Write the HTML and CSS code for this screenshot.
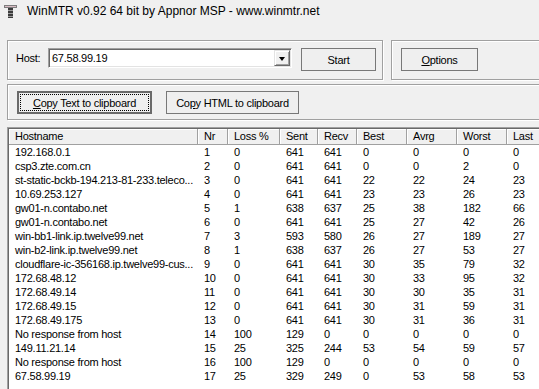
FILE: index.html
```html
<!DOCTYPE html>
<html>
<head>
<meta charset="utf-8">
<link rel="stylesheet" href="styles.css">
</head>
<body>
<div class="window">
  <div class="titlebar">
    <svg class="app-icon" width="13" height="13" viewBox="0 0 13 13">
      <rect x="0" y="0" width="13" height="3" fill="#7d7d7d"/>
      <rect x="1" y="1" width="11" height="1" fill="#d9bcc4"/>
      <rect x="4" y="3" width="5" height="10" fill="#3b3b3b"/>
      <rect x="4" y="5" width="5" height="1" fill="#9b9b9b"/>
      <rect x="4" y="8" width="5" height="1" fill="#9b9b9b"/>
      <rect x="4" y="11" width="5" height="1" fill="#9b9b9b"/>
    </svg>
    <span class="title">WinMTR v0.92 64 bit by Appnor MSP - www.winmtr.net</span>
  </div>
  <div class="client">
    <div class="top-row">
      <div class="group group-host">
        <span class="host-label">Host:</span>
        <div class="combo">
          <span class="combo-text">67.58.99.19</span>
          <span class="combo-btn"><span class="arrow"></span></span>
        </div>
        <button class="btn btn-start">Start</button>
      </div>
      <div class="group group-options">
        <button class="btn btn-options"><u>O</u>ptions</button>
      </div>
    </div>
    <div class="group group-copy">
      <button class="btn btn-default btn-copytext"><span class="focus"><u>C</u>opy Text to clipboard</span></button>
      <button class="btn btn-copyhtml">Co<u>p</u>y HTML to clipboard</button>
    </div>
    <div class="list">
      <div class="lrow header">
        <span class="hc">Hostname</span><span class="hc">Nr</span><span class="hc">Loss %</span><span class="hc">Sent</span><span class="hc">Recv</span><span class="hc">Best</span><span class="hc">Avrg</span><span class="hc">Worst</span><span class="hc">Last</span>
      </div>
      <div class="lrow"><span>192.168.0.1</span><span>1</span><span>0</span><span>641</span><span>641</span><span>0</span><span>0</span><span>0</span><span>0</span></div>
      <div class="lrow"><span>csp3.zte.com.cn</span><span>2</span><span>0</span><span>641</span><span>641</span><span>0</span><span>0</span><span>2</span><span>0</span></div>
      <div class="lrow"><span>st-static-bckb-194.213-81-233.teleco...</span><span>3</span><span>0</span><span>641</span><span>641</span><span>22</span><span>22</span><span>24</span><span>23</span></div>
      <div class="lrow"><span>10.69.253.127</span><span>4</span><span>0</span><span>641</span><span>641</span><span>23</span><span>23</span><span>26</span><span>23</span></div>
      <div class="lrow"><span>gw01-n.contabo.net</span><span>5</span><span>1</span><span>638</span><span>637</span><span>25</span><span>38</span><span>182</span><span>66</span></div>
      <div class="lrow"><span>gw01-n.contabo.net</span><span>6</span><span>0</span><span>641</span><span>641</span><span>25</span><span>27</span><span>42</span><span>26</span></div>
      <div class="lrow"><span>win-bb1-link.ip.twelve99.net</span><span>7</span><span>3</span><span>593</span><span>580</span><span>26</span><span>27</span><span>189</span><span>27</span></div>
      <div class="lrow"><span>win-b2-link.ip.twelve99.net</span><span>8</span><span>1</span><span>638</span><span>637</span><span>26</span><span>27</span><span>53</span><span>27</span></div>
      <div class="lrow"><span>cloudflare-ic-356168.ip.twelve99-cus...</span><span>9</span><span>0</span><span>641</span><span>641</span><span>30</span><span>35</span><span>79</span><span>32</span></div>
      <div class="lrow"><span>172.68.48.12</span><span>10</span><span>0</span><span>641</span><span>641</span><span>30</span><span>33</span><span>95</span><span>32</span></div>
      <div class="lrow"><span>172.68.49.14</span><span>11</span><span>0</span><span>641</span><span>641</span><span>30</span><span>30</span><span>35</span><span>31</span></div>
      <div class="lrow"><span>172.68.49.15</span><span>12</span><span>0</span><span>641</span><span>641</span><span>30</span><span>31</span><span>59</span><span>31</span></div>
      <div class="lrow"><span>172.68.49.175</span><span>13</span><span>0</span><span>641</span><span>641</span><span>30</span><span>31</span><span>36</span><span>31</span></div>
      <div class="lrow"><span>No response from host</span><span>14</span><span>100</span><span>129</span><span>0</span><span>0</span><span>0</span><span>0</span><span>0</span></div>
      <div class="lrow"><span>149.11.21.14</span><span>15</span><span>25</span><span>325</span><span>244</span><span>53</span><span>54</span><span>59</span><span>57</span></div>
      <div class="lrow"><span>No response from host</span><span>16</span><span>100</span><span>129</span><span>0</span><span>0</span><span>0</span><span>0</span><span>0</span></div>
      <div class="lrow"><span>67.58.99.19</span><span>17</span><span>25</span><span>329</span><span>249</span><span>0</span><span>53</span><span>58</span><span>53</span></div>
    </div>
  </div>
</div>
</body>
</html>
```
FILE: styles.css
```css
html, body {
  margin: 0;
  padding: 0;
}
body {
  width: 539px;
  height: 389px;
  overflow: hidden;
  background: #f0f0f0;
  font-family: "Liberation Sans", Arial, sans-serif;
  font-size: 11px;
  letter-spacing: -0.25px;
  color: #000;
}
.window {
  width: 539px;
  height: 389px;
  overflow: hidden;
}
.titlebar {
  height: 22px;
  display: flex;
  align-items: center;
  padding-left: 4px;
}
.app-icon {
  display: block;
  flex: none;
}
.title {
  margin-left: 10px;
  font-size: 12px;
  letter-spacing: 0;
  white-space: nowrap;
  color: #000;
}
.client {
  padding-top: 18px;
  padding-left: 7px;
}
.top-row {
  display: flex;
  width: 600px;
}
.group {
  box-sizing: border-box;
  border: 1px solid #a0a0a0;
  box-shadow: 1px 1px 0 #fff, inset 1px 1px 0 #fff;
  display: flex;
  align-items: flex-start;
  flex: none;
}
.group-host {
  width: 376px;
  height: 40px;
  padding-top: 7px;
  padding-left: 8px;
}
.group-options {
  width: 200px;
  height: 40px;
  margin-left: 8px;
  padding-top: 6px;
  padding-left: 9px;
}
.group-copy {
  width: 600px;
  height: 36px;
  margin-top: 4px;
  padding-top: 6px;
  padding-left: 9px;
}
.host-label {
  width: 32px;
  line-height: 20px;
  white-space: nowrap;
}
.combo {
  box-sizing: border-box;
  width: 244px;
  height: 20px;
  background: #fff;
  border: 1px solid;
  border-color: #a0a0a0 #fff #fff #a0a0a0;
  box-shadow: inset 1px 1px 0 #696969, inset -1px -1px 0 #e3e3e3;
  padding: 1px;
  display: flex;
  align-items: center;
}
.combo-text {
  flex: 1;
  padding-left: 2px;
  line-height: 16px;
  white-space: nowrap;
}
.combo-btn {
  box-sizing: border-box;
  width: 16px;
  height: 16px;
  background: #f0f0f0;
  border: 1px solid;
  border-color: #e3e3e3 #696969 #696969 #e3e3e3;
  box-shadow: inset 1px 1px 0 #fff, inset -1px -1px 0 #a0a0a0;
  display: flex;
  align-items: center;
  justify-content: center;
}
.arrow {
  width: 0;
  height: 0;
  border-left: 3.5px solid transparent;
  border-right: 3.5px solid transparent;
  border-top: 4px solid #000;
  margin-top: 1px;
}
.btn {
  box-sizing: border-box;
  font-family: inherit;
  font-size: 11px;
  letter-spacing: -0.25px;
  color: #000;
  background: #efefef;
  border: 1px solid #787878;
  padding: 0;
  margin: 0;
  height: 23px;
  display: flex;
  align-items: center;
  justify-content: center;
  white-space: nowrap;
}
.btn u {
  text-decoration: underline;
  text-underline-offset: 1px;
}
.btn-start {
  width: 75px;
  margin-left: 9px;
}
.btn-options {
  width: 77px;
  margin-top: 1px;
}
.btn-default {
  border: 2px solid #6a6a6a;
}
.btn-copytext {
  width: 135px;
  height: 23px;
  padding: 1px;
}
.focus {
  box-sizing: border-box;
  width: 100%;
  height: 100%;
  border: 1px dotted #000;
  display: flex;
  align-items: center;
  justify-content: center;
}
.btn-copyhtml {
  width: 133px;
  margin-left: 14px;
}
.list {
  box-sizing: border-box;
  width: 600px;
  height: 300px;
  margin-top: 7px;
  background: #fff;
  border-top: 1px solid #a0a0a0;
  border-left: 1px solid #a0a0a0;
  box-shadow: inset 1px 1px 0 #696969;
  padding-top: 1px;
  padding-left: 1px;
}
.lrow {
  display: grid;
  grid-template-columns: 189px 30px 52px 38px 39px 50px 50px 50px 60px;
  height: 14px;
  line-height: 14px;
}
.lrow span {
  padding-left: 6px;
  white-space: nowrap;
  overflow: hidden;
}
.header {
  height: 16px;
  line-height: 15px;
  background: #f0f0f0;
  border-bottom: 1px solid #a0a0a0;
  box-sizing: border-box;
}
.header .hc {
  border-right: 1px solid #a0a0a0;
  box-shadow: inset 1px 1px 0 #fff;
}
```
